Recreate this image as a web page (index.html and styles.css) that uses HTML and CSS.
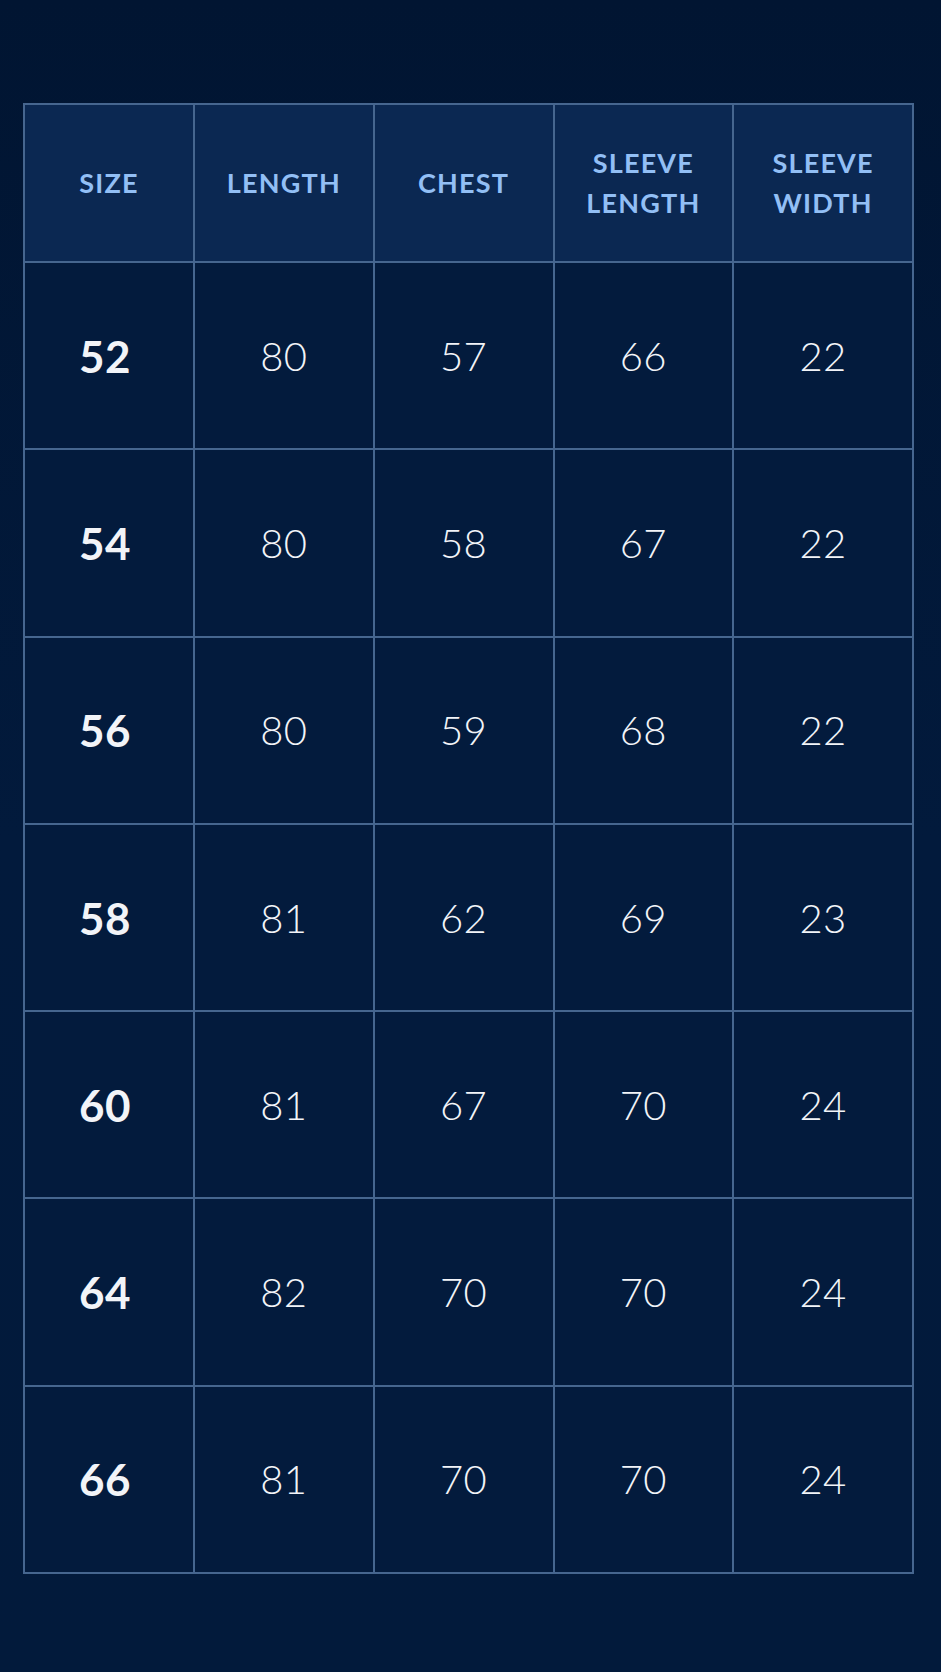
FILE: index.html
```html
<!DOCTYPE html>
<html lang="en">
<head>
<meta charset="utf-8">
<title>Size chart</title>
<link rel="stylesheet" href="styles.css">
</head>
<body>
<main class="page">
  <div class="chart">
    <div class="cell head">SIZE</div>
    <div class="cell head">LENGTH</div>
    <div class="cell head">CHEST</div>
    <div class="cell head">SLEEVE<br>LENGTH</div>
    <div class="cell head">SLEEVE<br>WIDTH</div>

    <div class="cell size">52</div><div class="cell">80</div><div class="cell">57</div><div class="cell">66</div><div class="cell">22</div>
    <div class="cell size">54</div><div class="cell">80</div><div class="cell">58</div><div class="cell">67</div><div class="cell">22</div>
    <div class="cell size">56</div><div class="cell">80</div><div class="cell">59</div><div class="cell">68</div><div class="cell">22</div>
    <div class="cell size">58</div><div class="cell">81</div><div class="cell">62</div><div class="cell">69</div><div class="cell">23</div>
    <div class="cell size">60</div><div class="cell">81</div><div class="cell">67</div><div class="cell">70</div><div class="cell">24</div>
    <div class="cell size">64</div><div class="cell">82</div><div class="cell">70</div><div class="cell">70</div><div class="cell">24</div>
    <div class="cell size">66</div><div class="cell">81</div><div class="cell">70</div><div class="cell">70</div><div class="cell">24</div>
  </div>
</main>
</body>
</html>
```
FILE: styles.css
```css
html, body {
  margin: 0;
  padding: 0;
}
body {
  width: 941px;
  height: 1672px;
  background: linear-gradient(180deg, #011532 0%, #021a3c 50%, #021a3b 100%);
  font-family: Lato, "Open Sans", sans-serif;
  overflow: hidden;
}
.page {
  padding: 103px 27px 0 23px;
}
.chart {
  width: 891px;
  box-sizing: border-box;
  display: grid;
  grid-template-columns: 168px repeat(4, 1fr);
  grid-template-rows: 156px repeat(7, 185.3px);
  gap: 2px;
  padding: 2px;
  background: #46668f;
}
.cell {
  display: flex;
  align-items: center;
  justify-content: center;
  text-align: center;
  background: #031b3d;
  color: #f2f4f8;
  font-size: 40px;
  font-weight: 300;
  letter-spacing: 0.5px;
}
.cell.size {
  font-weight: 700;
  font-size: 44px;
  padding-right: 8px;
}
.cell.head {
  background: #0b2852;
  color: #92bff5;
  font-size: 27px;
  font-weight: 700;
  line-height: 40px;
  letter-spacing: 1.2px;
  padding: 0;
}
```
